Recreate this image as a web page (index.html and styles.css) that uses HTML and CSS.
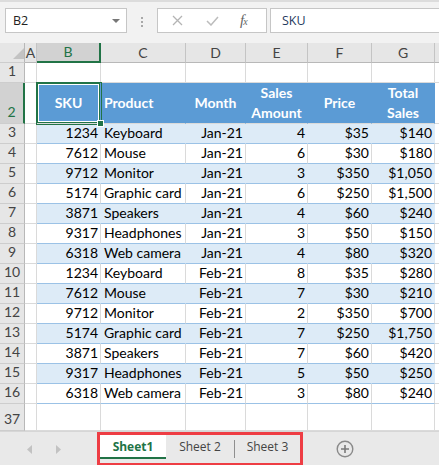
FILE: index.html
```html
<!DOCTYPE html>
<html lang="en">
<head>
  <meta charset="UTF-8">
  <meta name="viewport" content="width=device-width, initial-scale=1.0">
  <title>Sales - Excel</title>
  <link rel="stylesheet" href="styles.css">
</head>
<body>
  <div class="fbar">
    <div class="namebox"><span>B2</span><svg width="8" height="4" viewBox="0 0 8 4"><path d="M0 0h8L4 4z" fill="#777"/></svg></div>
    <div class="grip"><i></i><i></i><i></i></div>
    <div class="fbtns">
      <svg class="x" width="11" height="11" viewBox="0 0 11 11"><path d="M1 1l9 9M10 1l-9 9" stroke="#b4b4b4" stroke-width="1.3" fill="none"/></svg>
      <svg class="ok" width="13" height="10" viewBox="0 0 13 10"><path d="M1 5l4 4 7-8" stroke="#bcbcbc" stroke-width="1.5" fill="none"/></svg>
      <span class="fx"><i>f</i><i class="sub">x</i></span>
    </div>
    <div class="finput">SKU</div>
  </div>

  <table class="sheet">
    <colgroup>
      <col style="width:25px"><col style="width:12px"><col style="width:64px"><col style="width:85px"><col style="width:60px"><col style="width:62px"><col style="width:64px"><col style="width:63px"><col style="width:10px">
    </colgroup>
    <tr class="hdr"><th class="corner"><svg width="11" height="11" viewBox="0 0 11 11"><path d="M11 0v11H0z" fill="#c3c3c3"/></svg></th><th>A</th><th class="sel">B</th><th>C</th><th>D</th><th>E</th><th>F</th><th>G</th><th></th></tr>
    <tr class="r1"><th>1</th><td></td><td></td><td></td><td></td><td></td><td></td><td></td><td></td></tr>
    <tr class="r2"><th class="sel">2</th><td></td><td class="cur">SKU</td><td class="l">Product</td><td>Month</td><td>Sales<br>Amount</td><td>Price</td><td>Total<br>Sales</td><td></td></tr>
    <tr class="b"><th>3</th><td></td><td class="n">1234</td><td>Keyboard</td><td class="n">Jan-21</td><td class="n">4</td><td class="n">$35</td><td class="n">$140</td><td></td></tr>
    <tr class="w"><th>4</th><td></td><td class="n">7612</td><td>Mouse</td><td class="n">Jan-21</td><td class="n">6</td><td class="n">$30</td><td class="n">$180</td><td></td></tr>
    <tr class="b"><th>5</th><td></td><td class="n">9712</td><td>Monitor</td><td class="n">Jan-21</td><td class="n">3</td><td class="n">$350</td><td class="n">$1,050</td><td></td></tr>
    <tr class="w"><th>6</th><td></td><td class="n">5174</td><td>Graphic card</td><td class="n">Jan-21</td><td class="n">6</td><td class="n">$250</td><td class="n">$1,500</td><td></td></tr>
    <tr class="b"><th>7</th><td></td><td class="n">3871</td><td>Speakers</td><td class="n">Jan-21</td><td class="n">4</td><td class="n">$60</td><td class="n">$240</td><td></td></tr>
    <tr class="w"><th>8</th><td></td><td class="n">9317</td><td>Headphones</td><td class="n">Jan-21</td><td class="n">3</td><td class="n">$50</td><td class="n">$150</td><td></td></tr>
    <tr class="b"><th>9</th><td></td><td class="n">6318</td><td>Web camera</td><td class="n">Jan-21</td><td class="n">4</td><td class="n">$80</td><td class="n">$320</td><td></td></tr>
    <tr class="w"><th>10</th><td></td><td class="n">1234</td><td>Keyboard</td><td class="n">Feb-21</td><td class="n">8</td><td class="n">$35</td><td class="n">$280</td><td></td></tr>
    <tr class="b"><th>11</th><td></td><td class="n">7612</td><td>Mouse</td><td class="n">Feb-21</td><td class="n">7</td><td class="n">$30</td><td class="n">$210</td><td></td></tr>
    <tr class="w"><th>12</th><td></td><td class="n">9712</td><td>Monitor</td><td class="n">Feb-21</td><td class="n">2</td><td class="n">$350</td><td class="n">$700</td><td></td></tr>
    <tr class="b"><th>13</th><td></td><td class="n">5174</td><td>Graphic card</td><td class="n">Feb-21</td><td class="n">7</td><td class="n">$250</td><td class="n">$1,750</td><td></td></tr>
    <tr class="w"><th>14</th><td></td><td class="n">3871</td><td>Speakers</td><td class="n">Feb-21</td><td class="n">7</td><td class="n">$60</td><td class="n">$420</td><td></td></tr>
    <tr class="b"><th>15</th><td></td><td class="n">9317</td><td>Headphones</td><td class="n">Feb-21</td><td class="n">5</td><td class="n">$50</td><td class="n">$250</td><td></td></tr>
    <tr class="w"><th>16</th><td></td><td class="n">6318</td><td>Web camera</td><td class="n">Feb-21</td><td class="n">3</td><td class="n">$80</td><td class="n">$240</td><td></td></tr>
    <tr class="r37"><th>37</th><td></td><td></td><td></td><td></td><td></td><td></td><td></td><td></td></tr>
  </table>

  <div class="tabbar">
    <div class="nav">
      <svg width="5" height="9" viewBox="0 0 5 9"><path d="M5 0v9L0 4.5z" fill="#c2c2c2"/></svg>
      <svg width="5" height="9" viewBox="0 0 5 9"><path d="M0 0v9l5-4.5z" fill="#c2c2c2"/></svg>
    </div>
    <div class="tabs">
      <div class="tab active">Sheet1</div>
      <div class="tab">Sheet 2</div>
      <span class="sep"></span>
      <div class="tab">Sheet 3</div>
    </div>
    <svg class="add" width="18" height="18" viewBox="0 0 18 18"><circle cx="9" cy="9" r="7.8" stroke="#8a8a8a" stroke-width="1.4" fill="none"/><path d="M9 5v8M5 9h8" stroke="#7a7a7a" stroke-width="1.6"/></svg>
  </div>
</body>
</html>
```

FILE: styles.css
```css
:root{--green:#217346;--blue:#5b9bd5;--band:#ddebf7;--line:#9bc2e6;--grid:#dadada;--hdr:#e6e6e6}
body{margin:0;width:439px;height:465px;overflow:hidden;background:#fff;font-family:Lato,'Liberation Sans',sans-serif}

/* formula bar */
.fbar{height:43px;box-sizing:border-box;background:#f2f2f2;border-top:2px solid #dcdcdc;display:flex;align-items:flex-start;padding:6px 0 0 5px;font-family:'Open Sans',sans-serif;font-size:12.5px;color:#222}
.namebox{width:122px;height:25px;box-sizing:border-box;background:#fff;border:1px solid #c6c6c6;display:flex;align-items:center;justify-content:space-between;padding:0 6px 0 7px}
.grip{width:30px;height:25px;display:flex;flex-direction:column;align-items:center;gap:2px;padding-top:9px;box-sizing:border-box}
.grip i{width:2px;height:2px;background:#a8a8a8}
.fbtns{width:110px;height:25px;box-sizing:border-box;background:#fff;border:1px solid #c6c6c6;display:flex;align-items:center;padding-left:14px}
.fbtns .ok{margin-left:23px}
.fx{margin-left:21px;font-family:'Liberation Serif',serif;color:#666;font-size:15px;line-height:1}
.fx .sub{font-size:10px;margin-left:-1px}
.finput{flex:1;margin-left:3px;height:25px;box-sizing:border-box;background:#fff;border:1px solid #c6c6c6;border-right:none;padding-left:11px;line-height:23px;color:#1f3a60}

/* grid */
.sheet{border-collapse:separate;border-spacing:0;table-layout:fixed;width:445px}
.sheet td,.sheet th{padding:0 2px 2px 3px;font-size:14px;line-height:16px;vertical-align:bottom;border-right:1px solid var(--grid);border-bottom:1px solid var(--grid);white-space:nowrap;overflow:hidden;font-weight:normal;text-align:left;color:#000}
.sheet th{background:var(--hdr);color:#444;text-align:center}
.sheet tr th:first-child{border-right-color:#b8b8b8;border-bottom-color:#cdcdcd;padding:0 0 3px}
.hdr th{vertical-align:middle;padding:0;border-right-color:#c4c4c4;border-bottom-color:#b8b8b8}
.hdr th.corner{text-align:right;vertical-align:bottom;padding:0 2px 3px 0}
.hdr th.corner svg{display:block;margin-left:auto}
.hdr th.sel{background:#d2d2d2;border-bottom:2px solid var(--green);color:var(--green)}
.sheet tr th.sel{background:#d2d2d2;border-right:2px solid var(--green);color:var(--green)}
.hdr{height:20px}
.r1{height:20px}
.r2{height:40px}
.b,.w{height:20px}
.r37{height:27px}
.r37 th{padding-bottom:4px}

/* table range */
.r2 td:nth-child(n+3):nth-child(-n+8){background:var(--blue);border-right-color:var(--blue);color:#fff;font-weight:700;text-align:center;vertical-align:middle;line-height:20px;padding:0 2px}
.r2 td.l:nth-child(n){text-align:left;padding-left:3px}
.b td:nth-child(n+3):nth-child(-n+8){background:var(--band);border-right-color:var(--band);border-bottom-color:var(--line)}
.w td:nth-child(n+3):nth-child(-n+8){border-bottom-color:var(--line)}
.n{text-align:right!important}

/* active cell */
.sheet td.cur{position:relative;overflow:visible;box-shadow:0 0 0 1px var(--green),inset 0 0 0 1px var(--green),inset 0 0 0 2px #fff}
.sheet td.cur::after{content:"";position:absolute;right:-4px;bottom:-4px;width:5px;height:5px;background:var(--green);border:1px solid #fff}

/* sheet tabs */
.tabbar{height:35px;box-sizing:border-box;background:#e9e9e9;border-top:1px solid #d6d6d6;display:flex;align-items:flex-start;font-family:'Open Sans',sans-serif;font-size:12px;color:#444}
.nav{width:97px;height:34px;display:flex;align-items:center;padding-left:27px;gap:24px;box-sizing:border-box}
.tabs{width:206px;height:34px;box-sizing:border-box;border:3px solid #ee3d44;display:flex;align-items:flex-start}
.tab{height:24px;line-height:24px;text-align:center;width:68px}
.tab.active{width:66px;height:24px;box-sizing:border-box;background:#fff;border-bottom:2px solid var(--green);color:var(--green);font-weight:700;line-height:23px}
.tab:last-child{flex:1;width:auto;padding-right:2px;padding-left:2px}
.sep{width:1px;height:18px;background:#8f8f8f;margin-top:5px}
.add{align-self:center;margin-left:33px}
```
